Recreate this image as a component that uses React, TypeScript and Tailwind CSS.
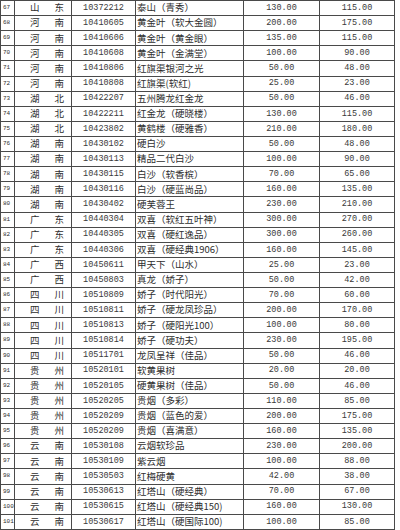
type Row = [string, string, string, string, string, string];

const rows: Row[] = [
  ['67', '山东', '10372212', '泰山（青秀）', '130.00', '115.00'],
  ['68', '河南', '10410605', '黄金叶（软大金圆）', '200.00', '175.00'],
  ['69', '河南', '10410606', '黄金叶（黄金眼）', '135.00', '115.00'],
  ['70', '河南', '10410608', '黄金叶（金满堂）', '100.00', '90.00'],
  ['71', '河南', '10410806', '红旗渠银河之光', '50.00', '48.00'],
  ['72', '河南', '10410808', '红旗渠(软红)', '25.00', '23.00'],
  ['73', '湖北', '10422207', '五州腾龙红金龙', '50.00', '46.00'],
  ['74', '湖北', '10422211', '红金龙（硬晓楼）', '130.00', '115.00'],
  ['75', '湖北', '10423802', '黄鹤楼（硬雅香）', '210.00', '180.00'],
  ['76', '湖南', '10430102', '硬白沙', '50.00', '48.00'],
  ['77', '湖南', '10430113', '精品二代白沙', '100.00', '90.00'],
  ['78', '湖南', '10430115', '白沙（软香槟）', '70.00', '65.00'],
  ['79', '湖南', '10430116', '白沙（硬蓝尚品）', '160.00', '135.00'],
  ['80', '湖南', '10430402', '硬芙蓉王', '230.00', '210.00'],
  ['81', '广东', '10440304', '双喜（软红五叶神）', '300.00', '270.00'],
  ['82', '广东', '10440305', '双喜（硬红逸品）', '300.00', '260.00'],
  ['83', '广东', '10440306', '双喜（硬经典1906）', '160.00', '145.00'],
  ['84', '广西', '10450611', '甲天下（山水）', '25.00', '23.00'],
  ['85', '广西', '10450803', '真龙（娇子）', '50.00', '42.00'],
  ['86', '四川', '10510809', '娇子（时代阳光）', '70.00', '60.00'],
  ['87', '四川', '10510811', '娇子（硬龙凤珍品）', '200.00', '170.00'],
  ['88', '四川', '10510813', '娇子（硬阳光100）', '100.00', '80.00'],
  ['89', '四川', '10510814', '娇子（硬功夫）', '230.00', '195.00'],
  ['90', '四川', '10511701', '龙凤呈祥（佳品）', '50.00', '46.00'],
  ['91', '贵州', '10520101', '软黄果树', '20.00', '20.00'],
  ['92', '贵州', '10520105', '硬黄果树（佳品）', '50.00', '46.00'],
  ['93', '贵州', '10520205', '贵烟（多彩）', '110.00', '85.00'],
  ['94', '贵州', '10520209', '贵烟（蓝色的爱）', '200.00', '175.00'],
  ['95', '贵州', '10520209', '贵烟（喜满意）', '160.00', '135.00'],
  ['96', '云南', '10530108', '云烟软珍品', '230.00', '200.00'],
  ['97', '云南', '10530109', '紫云烟', '100.00', '88.00'],
  ['98', '云南', '10530503', '红梅硬黄', '42.00', '38.00'],
  ['99', '云南', '10530613', '红塔山（硬经典）', '70.00', '67.00'],
  ['100', '云南', '10530615', '红塔山（硬经典150)', '160.00', '130.00'],
  ['101', '云南', '10530617', '红塔山（硬国际100)', '100.00', '85.00'],
];

const cjk = "font-['Noto_Sans_CJK_SC',sans-serif]";
const mono = "font-['Liberation_Mono',monospace]";

function PriceRow({ r }: { r: Row }) {
  const [idx, prov, code, name, price, retail] = r;
  return (
    <div className="grid h-[15.12px] grid-cols-[14px_57px_64px_108px_76px_75px] border-b border-[#4a4a4a] text-[#2e2e2e]">
      <div className={`flex items-center overflow-hidden border-r border-[#4a4a4a] pl-[2px] text-[6px] leading-none ${mono}`}>
        {idx}
      </div>
      <div className={`flex items-center gap-[15px] border-r border-[#4a4a4a] pl-[15px] text-[9.5px] leading-none ${cjk}`}>
        <span>{prov[0]}</span>
        <span>{prov[1]}</span>
      </div>
      <div className={`flex items-center justify-center border-r border-[#4a4a4a] text-[8.5px] leading-none text-[#3a3a3a] ${mono}`}>
        {code}
      </div>
      <div className={`flex items-center overflow-hidden whitespace-nowrap border-r border-[#4a4a4a] pl-[1px] text-[9.5px] leading-none ${cjk}`}>
        {name}
      </div>
      <div className={`flex items-center justify-center border-r border-[#4a4a4a] text-[8.5px] leading-none text-[#3a3a3a] ${mono}`}>
        {price}
      </div>
      <div className={`flex items-center justify-center border-r border-[#4a4a4a] text-[8.5px] leading-none text-[#3a3a3a] ${mono}`}>
        {retail}
      </div>
    </div>
  );
}

export default function App() {
  return (
    <div className="h-[530px] w-[400px] overflow-hidden bg-white">
      <div className="w-[395px] border-l border-t border-[#4a4a4a]">
        {rows.map((r) => (
          <PriceRow key={r[0]} r={r} />
        ))}
      </div>
    </div>
  );
}
